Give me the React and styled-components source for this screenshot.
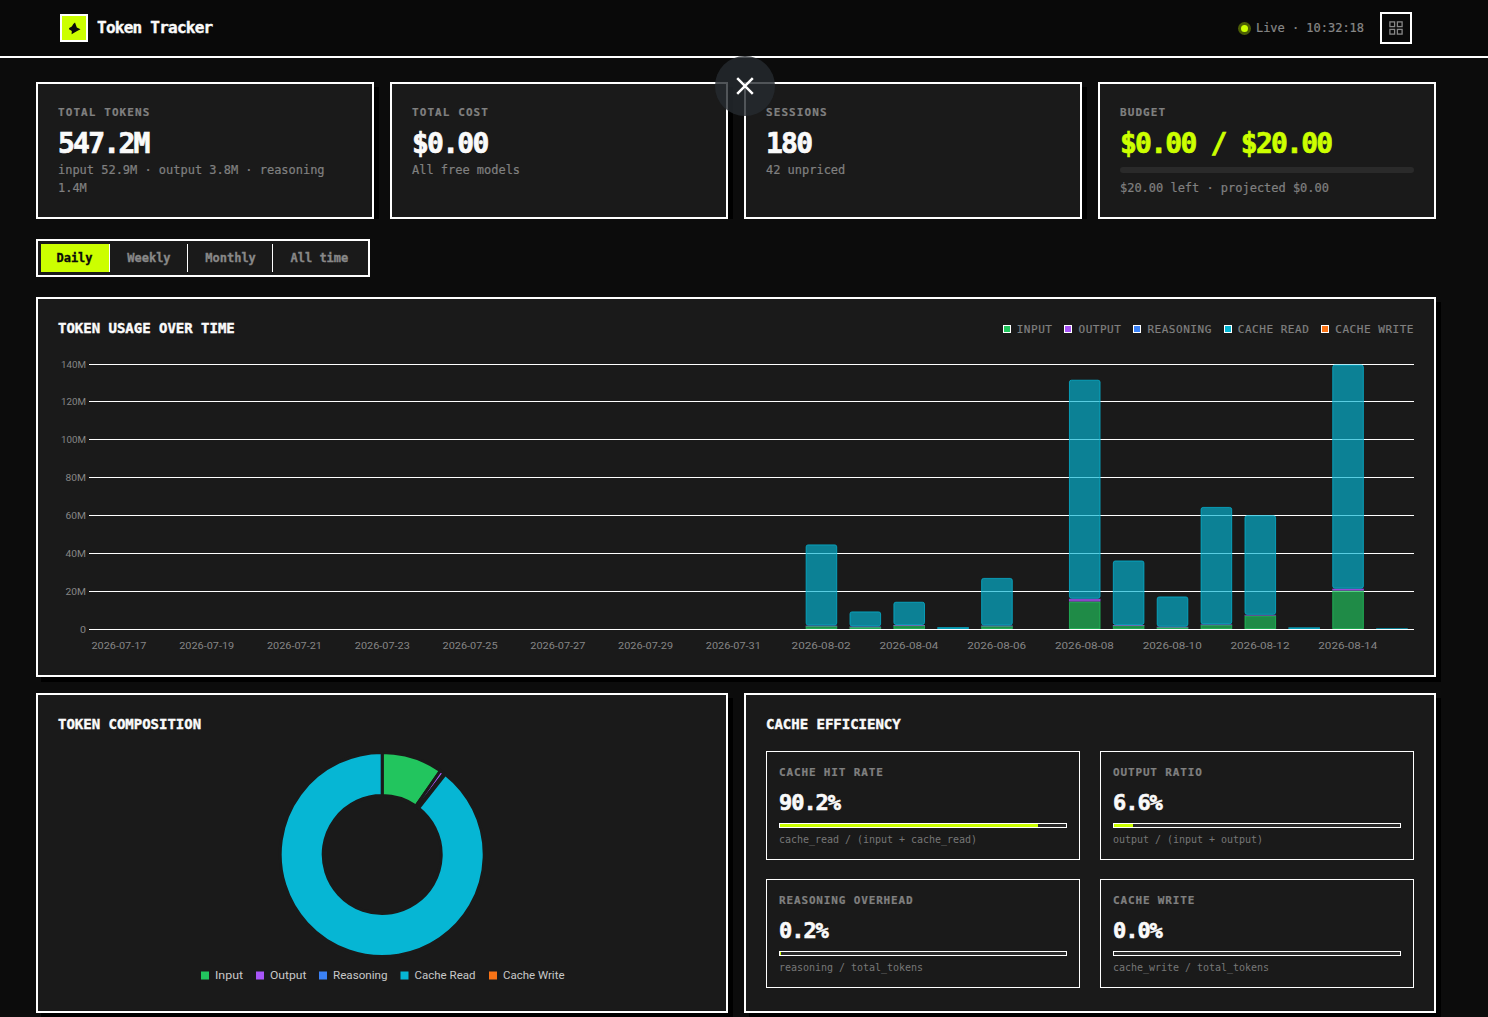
import React, { useState } from "react";
import styled, { createGlobalStyle } from "styled-components";

const GlobalStyle = createGlobalStyle`
  * {
    box-sizing: border-box;
  }

  body {
    margin: 0;
    background-color: #0c0c0c;
    color: #fafafa;
    font-family: "DejaVu Sans Mono", monospace;
    overflow: hidden;
  }
`;

const Page = styled.div`
  height: 1017px;
  overflow: hidden;
`;

const Header = styled.header`
  height: 58px;
  padding: 0 76px 0 60px;
  display: flex;
  align-items: center;
  justify-content: space-between;
  background-color: #090909;
  border-bottom: 2px solid #ffffff;
`;

const Brand = styled.div`
  display: flex;
  align-items: center;
  gap: 9px;
`;

const Logo = styled.div`
  width: 28px;
  height: 28px;
  border: 2px solid #ffffff;
  background-color: #ccff00;

  svg {
    display: block;
  }
`;

const BrandName = styled.h1`
  margin: 0;
  font-size: 16px;
  line-height: 24px;
  font-weight: 700;
  letter-spacing: -0.75px;
  -webkit-text-stroke: 0.4px currentColor;
`;

const HeaderRight = styled.div`
  display: flex;
  align-items: center;
  gap: 16px;
`;

const Live = styled.div`
  display: flex;
  align-items: center;
  gap: 8px;
  font-size: 12px;
  line-height: 18px;
  letter-spacing: -0.02px;
  color: #888888;
  -webkit-text-stroke: 0.2px currentColor;
`;

const LiveDot = styled.span`
  width: 7px;
  height: 7px;
  border-radius: 50%;
  background-color: #ccff00;
  box-shadow: 0 0 0 3px rgba(204, 255, 0, 0.35);
`;

const IconButton = styled.button`
  width: 32px;
  height: 32px;
  padding: 0;
  display: flex;
  align-items: center;
  justify-content: center;
  border: 2px solid #ffffff;
  background: transparent;
  color: #888888;
`;

const CloseButton = styled.button`
  position: absolute;
  top: 56px;
  left: 715px;
  width: 60px;
  height: 60px;
  padding: 0;
  display: flex;
  align-items: center;
  justify-content: center;
  border: none;
  border-radius: 50%;
  background-color: rgba(38, 42, 48, 0.8);
  z-index: 2;
`;

const Main = styled.main`
  width: 1400px;
  margin: 24px 0 0 36px;
`;

const Stats = styled.section`
  display: grid;
  grid-template-columns: repeat(4, 1fr);
  gap: 16px;
  height: 137px;
  margin-bottom: 20px;
  overflow: hidden;
`;

const Panel = styled.div`
  padding: 20px;
  border: 2px solid #ffffff;
  background-color: #1a1a1a;
  box-shadow: 5px 5px 0 #000000;
`;

const Label = styled.div`
  font-size: 11px;
  line-height: 18.5px;
  font-weight: 700;
  letter-spacing: ${({ $tight }) => ($tight ? "0.85px" : "1.08px")};
  color: #808080;
  -webkit-text-stroke: 0.2px currentColor;
`;

const StatValue = styled.div`
  margin: 2px 0 -1.5px;
  font-size: 28px;
  line-height: 38px;
  font-weight: 700;
  letter-spacing: -1.76px;
  color: ${({ $accent }) => ($accent ? "#ccff00" : "#fafafa")};
  -webkit-text-stroke: 0.7px currentColor;
`;

const StatSub = styled.div`
  font-size: 12px;
  line-height: 18px;
  letter-spacing: -0.02px;
  color: #808080;
  -webkit-text-stroke: 0.2px currentColor;
`;

const BudgetTrack = styled.div`
  height: 6px;
  margin: 6px 0;
  border-radius: 3px;
  background-color: #2a2a2a;
`;

const Tabs = styled.div`
  width: 334px;
  height: 38px;
  padding: 3px;
  display: flex;
  gap: 2px;
  margin-bottom: 20px;
  border: 2px solid #ffffff;
  background-color: #1a1a1a;
`;

const Tab = styled.button`
  padding: 0 16.3px 0 15.5px;
  border: none;
  border-right: 1px solid #ffffff;
  background-color: ${({ $active }) => ($active ? "#ccff00" : "transparent")};
  color: ${({ $active }) => ($active ? "#0a0a0a" : "#888888")};
  font-family: inherit;
  font-size: 12px;
  line-height: 18px;
  font-weight: 700;
  letter-spacing: -0.02px;
  white-space: nowrap;
  -webkit-text-stroke: 0.3px currentColor;

  &:last-child {
    border-right: none;
  }
`;

const ChartPanel = styled(Panel)`
  height: 380px;
  margin-bottom: 16px;
`;

const PanelHeader = styled.div`
  height: 20px;
  display: flex;
  justify-content: space-between;
  margin-bottom: ${({ $gap }) => $gap}px;
`;

const PanelTitle = styled.h2`
  margin: 0;
  font-size: 14px;
  line-height: 18.2px;
  font-weight: 700;
  letter-spacing: -0.01px;
  -webkit-text-stroke: 0.4px currentColor;
`;

const Legend = styled.div`
  display: flex;
  align-items: center;
  gap: 12px;
  padding-top: 2px;
`;

const LegendItem = styled.div`
  display: flex;
  align-items: center;
  gap: 6px;
  font-size: 11px;
  line-height: 16px;
  letter-spacing: 0.53px;
  color: #808080;
  -webkit-text-stroke: 0.2px currentColor;
`;

const Swatch = styled.span`
  width: 8px;
  height: 8px;
  margin-bottom: 2px;
  border: 1px solid #ffffff;
  background-color: ${({ $color }) => $color};
`;

const Chart = styled.svg`
  display: block;
  font-family: Roboto, sans-serif;
`;

const BottomRow = styled.section`
  display: grid;
  grid-template-columns: 1fr 1fr;
  gap: 16px;

  ${Panel} {
    height: 320px;
  }
`;

const Metrics = styled.div`
  display: grid;
  grid-template-columns: 1fr 1fr;
  gap: 19px 20px;
`;

const Metric = styled.div`
  height: 109px;
  padding: 12px;
  border: 1px solid #ffffff;
`;

const MetricValue = styled.div`
  margin-top: 2px;
  font-size: 22px;
  line-height: 35.5px;
  font-weight: 700;
  letter-spacing: -1.05px;
  -webkit-text-stroke: 0.6px currentColor;
`;

const MetricTrack = styled.div`
  height: 5px;
  margin: 3px 0 4px;
  border: 1px solid #ffffff;
  background-color: #2a2a2a;
`;

const MetricFill = styled.div`
  height: 100%;
  background-color: #ccff00;
`;

const MetricHint = styled.div`
  font-size: 10px;
  line-height: 15px;
  letter-spacing: -0.02px;
  color: #777777;
`;

const COLORS = {
  input: "#22c55e",
  output: "#a855f7",
  reasoning: "#3b82f6",
  cacheRead: "#06b6d4",
  cacheWrite: "#f97316",
};

const SERIES = [
  { name: "Input", color: COLORS.input },
  { name: "Output", color: COLORS.output },
  { name: "Reasoning", color: COLORS.reasoning },
  { name: "Cache Read", color: COLORS.cacheRead },
  { name: "Cache Write", color: COLORS.cacheWrite },
];

const DATES = [
  "2026-07-17", "2026-07-19", "2026-07-21", "2026-07-23", "2026-07-25",
  "2026-07-27", "2026-07-29", "2026-07-31", "2026-08-02", "2026-08-04",
  "2026-08-06", "2026-08-08", "2026-08-10", "2026-08-12", "2026-08-14",
];

// millions of tokens, day is the offset from 2026-07-17
const USAGE = [
  { day: 16, input: 1.6, output: 0.2, cacheRead: 42.9 },
  { day: 17, input: 1.1, output: 0.2, cacheRead: 8.0 },
  { day: 18, input: 2.0, output: 0.1, cacheRead: 12.3 },
  { day: 19, input: 0, output: 0, cacheRead: 1.0 },
  { day: 20, input: 1.7, output: 0.1, cacheRead: 25.2 },
  { day: 22, input: 14.5, output: 1.5, cacheRead: 115.7 },
  { day: 23, input: 2.0, output: 0.1, cacheRead: 34.1 },
  { day: 24, input: 1.0, output: 0.2, cacheRead: 16.0 },
  { day: 25, input: 2.2, output: 0.2, cacheRead: 62.1 },
  { day: 26, input: 7.1, output: 0.4, cacheRead: 52.6 },
  { day: 27, input: 0, output: 0, cacheRead: 0.9 },
  { day: 28, input: 20.3, output: 1.0, cacheRead: 118.4 },
  { day: 29, input: 0, output: 0, cacheRead: 0.4 },
];

const PERIODS = ["Daily", "Weekly", "Monthly", "All time"];

const METRICS = [
  { label: "CACHE HIT RATE", value: 90.2, hint: "cache_read / (input + cache_read)" },
  { label: "OUTPUT RATIO", value: 6.6, hint: "output / (input + output)" },
  { label: "REASONING OVERHEAD", value: 0.2, hint: "reasoning / total_tokens" },
  { label: "CACHE WRITE", value: 0.0, hint: "cache_write / total_tokens" },
];

const BASE = 279;
const PX_PER_M = 265 / 140;
const STEP = 43.886;
const BAR_WIDTH = 31.6;
const FIRST_CENTER = 61.25;

const Segment = ({ x, from, to, color, rounded }) => {
  const top = BASE - to * PX_PER_M;
  const height = (to - from) * PX_PER_M;
  if (height <= 0) return null;
  if (height < 2.5) {
    return <rect x={x} y={top} width={BAR_WIDTH} height={Math.max(height, 0.7)} fill={color} fillOpacity={0.85} />;
  }
  return (
    <rect
      x={x + 0.5}
      y={top + 0.5}
      width={BAR_WIDTH - 1}
      height={height - 1}
      rx={rounded ? 2 : 0}
      fill={color}
      fillOpacity={0.667}
      stroke={color}
      strokeOpacity={0.75}
    />
  );
};

const UsageChart = () => (
  <Chart width="1356" height="305" viewBox="0 0 1356 305">
    {[0, 20, 40, 60, 80, 100, 120, 140].map((tick) => {
      const y = Math.floor(BASE - tick * PX_PER_M + 0.001);
      const text = tick === 0 ? "0" : `${tick}M`;
      return (
        <g key={tick}>
          <rect x="31" y={y} width="1325" height="1" fill="#ffffff" />
          <text x="28" y={y + 3.5} textAnchor="end" fontSize="9.8" fill="#868686"
            textLength={tick === 0 ? 6 : tick < 100 ? 20.5 : 25} lengthAdjust="spacingAndGlyphs">
            {text}
          </text>
        </g>
      );
    })}
    {USAGE.map(({ day, input, output, cacheRead }) => {
      const x = FIRST_CENTER + day * STEP - BAR_WIDTH / 2;
      return (
        <g key={day}>
          <Segment x={x} from={0} to={input} color={COLORS.input} />
          <Segment x={x} from={input} to={input + output} color={COLORS.output} />
          <Segment x={x} from={input + output} to={input + output + cacheRead} color={COLORS.cacheRead} rounded />
        </g>
      );
    })}
    {DATES.map((date, index) => (
      <text key={date} x={FIRST_CENTER - 0.3 + index * 2 * STEP} y="299" textAnchor="middle" fontSize="9.8" fill="#868686"
        textLength={index < 8 ? 55 : 59} lengthAdjust="spacingAndGlyphs">
        {date}
      </text>
    ))}
  </Chart>
);

const slicePath = (start, end, outer, inner) => {
  const point = (angle, r) => {
    const rad = (angle * Math.PI) / 180;
    return `${324.2 + r * Math.sin(rad)} ${103.5 - r * Math.cos(rad)}`;
  };
  const large = end - start > 180 ? 1 : 0;
  return `M${point(start, outer)} A${outer} ${outer} 0 ${large} 1 ${point(end, outer)} L${point(end, inner)} A${inner} ${inner} 0 ${large} 0 ${point(start, inner)} Z`;
};

const SLICES = [
  { color: COLORS.input, start: 0, end: 34.8 },
  { color: COLORS.output, start: 34.8, end: 37.3 },
  { color: COLORS.reasoning, start: 37.3, end: 38.2 },
  { color: COLORS.cacheRead, start: 38.2, end: 360 },
];

const DONUT_LEGEND = [
  { x: 143, width: 28 },
  { x: 198, width: 36.5 },
  { x: 261, width: 54.5 },
  { x: 342.5, width: 61 },
  { x: 431, width: 61.5 },
];

const CompositionChart = () => (
  <Chart width="648" height="240" viewBox="0 0 648 240">
    {SLICES.map(({ color, start, end }) => (
      <path key={color} d={slicePath(start, end, 102, 59)} fill={color} stroke="#1a1a1a" strokeWidth="3" />
    ))}
    {SERIES.map(({ name, color }, index) => (
      <g key={name}>
        <rect x={DONUT_LEGEND[index].x} y="220.5" width="8" height="8" fill={color} />
        <text x={DONUT_LEGEND[index].x + 14} y="228" fontSize="11" fill="#c8c8c8"
          textLength={DONUT_LEGEND[index].width} lengthAdjust="spacingAndGlyphs">
          {name}
        </text>
      </g>
    ))}
  </Chart>
);

const App = () => {
  const [period, setPeriod] = useState("Daily");

  return <Page>
    <GlobalStyle />
    <Header>
      <Brand>
        <Logo>
          <svg width="24" height="24" viewBox="0 0 24 24">
            <path d="M13 6.5 L14.8 11.4 L18.5 13.3 L14.7 15.2 L9.6 18.2 L9.8 14.9 L7 13.3 L7.2 12.1 L9.8 10.4 L11.3 8 Z" fill="#0a0a0a" />
          </svg>
        </Logo>
        <BrandName>Token Tracker</BrandName>
      </Brand>
      <HeaderRight>
        <Live><LiveDot />Live · 10:32:18</Live>
        <IconButton aria-label="Layout">
          <svg width="14" height="14" viewBox="0 0 14 14" fill="none" stroke="currentColor" strokeWidth="1.3">
            <rect x="0.9" y="0.9" width="4.7" height="4.7" />
            <rect x="8.4" y="0.9" width="4.7" height="4.7" />
            <rect x="0.9" y="8.4" width="4.7" height="4.7" />
            <rect x="8.4" y="8.4" width="4.7" height="4.7" />
          </svg>
        </IconButton>
      </HeaderRight>
    </Header>
    <CloseButton aria-label="Close">
      <svg width="18" height="18" viewBox="0 0 18 18" stroke="#ffffff" strokeWidth="2.5">
        <path d="M1.2 1.2 L16.8 16.8 M16.8 1.2 L1.2 16.8" />
      </svg>
    </CloseButton>
    <Main>
      <Stats>
        <Panel>
          <Label>TOTAL TOKENS</Label>
          <StatValue>547.2M</StatValue>
          <StatSub>input 52.9M · output 3.8M · reasoning 1.4M</StatSub>
        </Panel>
        <Panel>
          <Label>TOTAL COST</Label>
          <StatValue>$0.00</StatValue>
          <StatSub>All free models</StatSub>
        </Panel>
        <Panel>
          <Label>SESSIONS</Label>
          <StatValue>180</StatValue>
          <StatSub>42 unpriced</StatSub>
        </Panel>
        <Panel>
          <Label>BUDGET</Label>
          <StatValue $accent>$0.00 / $20.00</StatValue>
          <BudgetTrack />
          <StatSub>$20.00 left · projected $0.00</StatSub>
        </Panel>
      </Stats>
      <Tabs>
        {PERIODS.map((name) => (
          <Tab key={name} $active={name === period} onClick={() => setPeriod(name)}>{name}</Tab>
        ))}
      </Tabs>
      <ChartPanel>
        <PanelHeader $gap={11}>
          <PanelTitle>TOKEN USAGE OVER TIME</PanelTitle>
          <Legend>
            {SERIES.map(({ name, color }) => (
              <LegendItem key={name}><Swatch $color={color} />{name.toUpperCase()}</LegendItem>
            ))}
          </Legend>
        </PanelHeader>
        <UsageChart />
      </ChartPanel>
      <BottomRow>
        <Panel>
          <PanelHeader $gap={16}>
            <PanelTitle>TOKEN COMPOSITION</PanelTitle>
          </PanelHeader>
          <CompositionChart />
        </Panel>
        <Panel>
          <PanelHeader $gap={16}>
            <PanelTitle>CACHE EFFICIENCY</PanelTitle>
          </PanelHeader>
          <Metrics>
            {METRICS.map(({ label, value, hint }) => (
              <Metric key={label}>
                <Label $tight>{label}</Label>
                <MetricValue>{value.toFixed(1)}%</MetricValue>
                <MetricTrack>
                  <MetricFill style={{ width: `${value}%` }} />
                </MetricTrack>
                <MetricHint>{hint}</MetricHint>
              </Metric>
            ))}
          </Metrics>
        </Panel>
      </BottomRow>
    </Main>
  </Page>
}

export default App;
